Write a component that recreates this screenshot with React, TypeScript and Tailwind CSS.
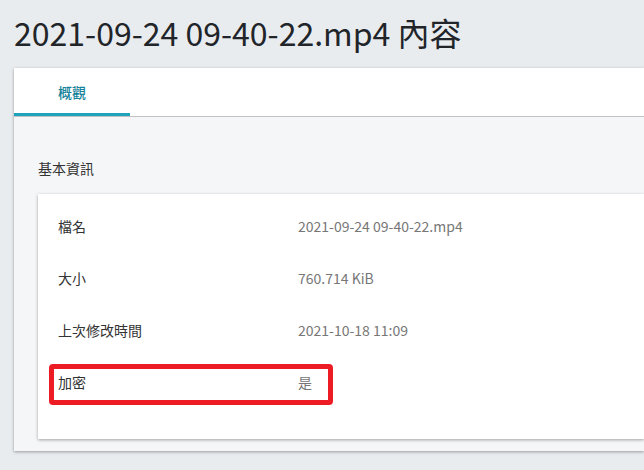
const ROWS = [
  { label: "檔名", value: "2021-09-24 09-40-22.mp4" },
  { label: "大小", value: "760.714 KiB" },
  { label: "上次修改時間", value: "2021-10-18 11:09" },
  { label: "加密", value: "是", marked: true },
];

export default function App() {
  return (
    <div className="min-h-[470px] overflow-hidden bg-[#e9ecef] pl-[14px] pt-[12px] font-['Noto_Sans_CJK_TC','Noto_Sans',sans-serif]">
      <h1 className="text-[32px] leading-[40px] font-normal text-[#212529] whitespace-nowrap">
        2021-09-24 09-40-22.mp4 內容
      </h1>

      <div className="mt-[16px] bg-[#f5f6f8] pb-[12px] shadow-[0_1px_3px_rgba(0,0,0,0.35)]">
        {/* tabs */}
        <div className="flex h-[49px] bg-white border-b border-[#c2c2c2]">
          <div className="flex w-[116px] items-center justify-center border-b-[3px] border-[#1fa3bd] pt-[3px] text-[14px] font-medium text-[#17839b]">
            概觀
          </div>
        </div>

        <div className="pl-[24px] pt-[41px]">
          <h2 className="text-[14px] leading-[20px] text-[#333]">基本資訊</h2>

          <div className="mt-[16px] bg-white px-[20px] pt-[6px] pb-[31px] shadow-[0_1px_3px_rgba(0,0,0,0.35)]">
            {ROWS.map((row) => (
              <div key={row.label} className="relative flex h-[52px] items-center text-[14px]">
                <div className="w-[240px] text-[#333]">{row.label}</div>
                <div className="text-[#777]">{row.value}</div>
                {row.marked && (
                  <div className="absolute left-[-9px] top-[8px] h-[41px] w-[284px] rounded-[4px] border-[5px] border-[#ed1c24]" />
                )}
              </div>
            ))}
          </div>
        </div>
      </div>
    </div>
  );
}
